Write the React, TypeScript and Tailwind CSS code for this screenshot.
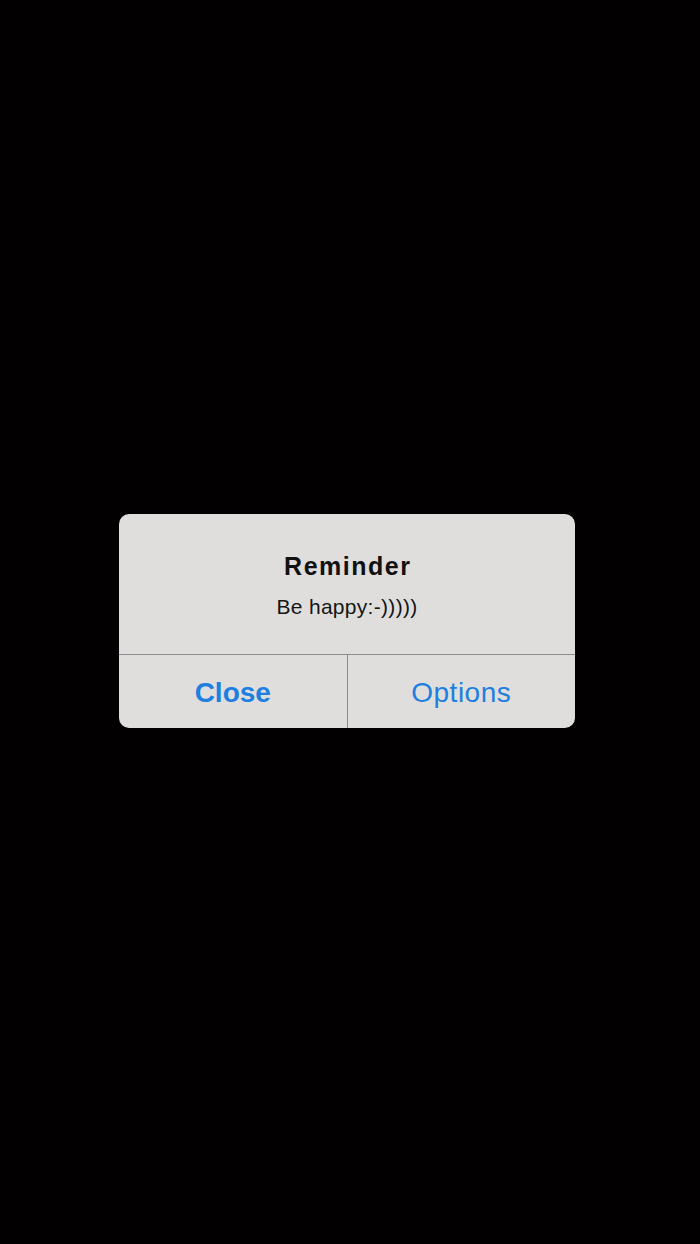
export default function App() {
  return (
    <div
      className="w-[700px] h-[1244px] bg-[#020000] flex justify-start items-start pl-[119px] pt-[514px]"
      style={{ fontFamily: '"Liberation Sans", Arial, sans-serif' }}
    >
      <div className="w-[456px] h-[214px] rounded-[10px] bg-[#dfdedd] flex flex-col overflow-hidden">
        <div className="h-[141px] flex flex-col items-center pt-[37px] border-b border-[#8d8c8c]">
          <div className="text-[25px] leading-[30px] font-bold text-[#111] tracking-[1.5px] pl-[1.5px]">
            Reminder
          </div>
          <div className="mt-[13px] text-[21px] leading-[26px] text-[#151515] tracking-[0.3px]">
            Be happy:-)))))
          </div>
        </div>
        <div className="flex-1 flex">
          <div className="flex-1 flex items-center justify-center border-r border-[#8d8c8c] pt-[3px]">
            <span className="text-[28px] leading-[32px] font-bold text-[#1d7fe0]">Close</span>
          </div>
          <div className="flex-1 flex items-center justify-center pt-[3px]">
            <span className="text-[28px] leading-[32px] text-[#1d7fe0] tracking-[0.5px]">Options</span>
          </div>
        </div>
      </div>
    </div>
  );
}
